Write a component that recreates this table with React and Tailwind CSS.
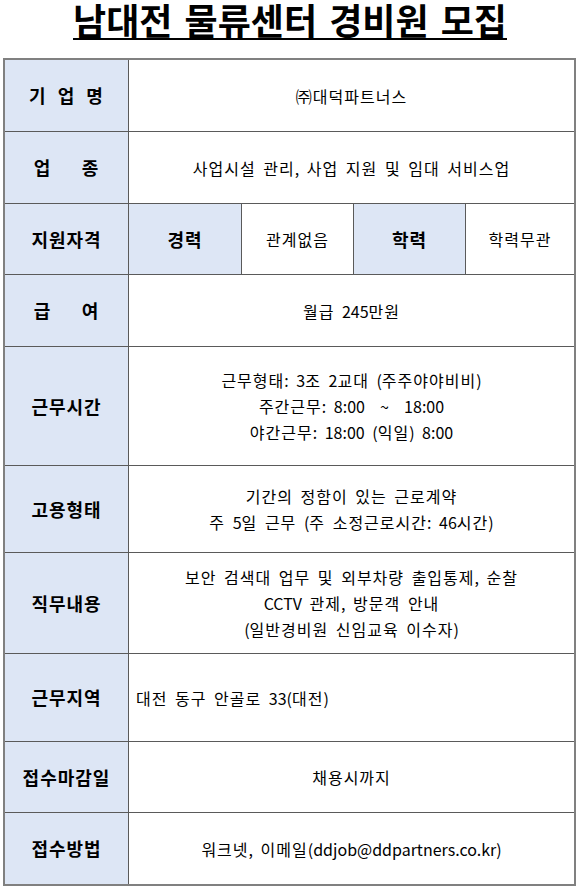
const font = { fontFamily: '"Noto Sans CJK KR", "Noto Sans", sans-serif' };

const rows = [
  { label: "기 업 명", wide: "[word-spacing:6px]", h: "h-[72px]", lines: ["㈜대덕파트너스"] },
  { label: "업      종", h: "h-[72px]", lines: ["사업시설 관리, 사업 지원 및 임대 서비스업"] },
  { label: "지원자격", h: "h-[71px]", split: true },
  { label: "급      여", h: "h-[72px]", lines: ["월급 245만원"] },
  {
    label: "근무시간",
    h: "h-[119px]",
    lines: ["근무형태: 3조 2교대 (주주야야비비)", "주간근무: 8:00  ~  18:00", "야간근무: 18:00 (익일) 8:00"],
  },
  { label: "고용형태", h: "h-[87px]", lines: ["기간의 정함이 있는 근로계약", "주 5일 근무 (주 소정근로시간: 46시간)"] },
  {
    label: "직무내용",
    h: "h-[101px]",
    lines: ["보안 검색대 업무 및 외부차량 출입통제, 순찰", "CCTV 관제, 방문객 안내", "(일반경비원 신임교육 이수자)"],
  },
  { label: "근무지역", h: "h-[88px]", lines: ["대전 동구 안골로 33(대전)"], left: true },
  { label: "접수마감일", h: "h-[71px]", lines: ["채용시까지"] },
  { label: "접수방법", h: "h-[71px]", lines: ["워크넷, 이메일(ddjob@ddpartners.co.kr)"], last: true },
];

// hangul gets a bit of tracking, latin/digits stay tight
function Spaced({ text }) {
  return text.split(/([가-힣㈜]+)/).map((part, i) =>
    /[가-힣㈜]/.test(part) ? (
      <span key={i} className="tracking-[1px]">
        {part}
      </span>
    ) : (
      <span key={i}>{part}</span>
    )
  );
}

function Row({ row }) {
  return (
    <div className={`flex ${row.h} ${row.last ? "" : "border-b border-[#5a5a5a]"}`}>
      <div
        className={`w-[124px] shrink-0 bg-[#dde6f5] border-r border-[#5a5a5a] flex items-center justify-center text-[18px] font-bold whitespace-pre tracking-[1px] ${
          row.wide || ""
        }`}
      >
        {row.label}
      </div>
      {row.split ? (
        <div className="flex-1 flex">
          <div className="w-[113px] bg-[#dde6f5] border-r border-[#5a5a5a] flex items-center justify-center text-[18px] font-bold tracking-[1px]">
            경력
          </div>
          <div className="w-[112px] border-r border-[#5a5a5a] flex items-center justify-center text-[16px] tracking-[1px]">
            관계없음
          </div>
          <div className="w-[112px] bg-[#dde6f5] border-r border-[#5a5a5a] flex items-center justify-center text-[18px] font-bold tracking-[1px]">
            학력
          </div>
          <div className="flex-1 flex items-center justify-center text-[16px] tracking-[1px]">학력무관</div>
        </div>
      ) : (
        <div
          className={`flex-1 flex flex-col justify-center text-[16px] leading-[26px] ${
            row.left ? "items-start pl-[7px]" : "items-center"
          }`}
        >
          {row.lines.map((l) => (
            <div key={l} className="whitespace-pre [word-spacing:4px]">
              <Spaced text={l} />
            </div>
          ))}
        </div>
      )}
    </div>
  );
}

export default function App() {
  return (
    <div className="w-[580px] h-[888px] bg-white text-black" style={font}>
      <div className="h-[58px] flex justify-center">
        <h1 className="text-[36px] font-bold leading-[38px] underline decoration-[2px] underline-offset-[3px] [word-spacing:4px]">
          남대전 물류센터 경비원 모집
        </h1>
      </div>
      <div className="ml-[3px] w-[573px] border-2 border-[#808080]">
        {rows.map((r) => (
          <Row key={r.label} row={r} />
        ))}
      </div>
    </div>
  );
}
